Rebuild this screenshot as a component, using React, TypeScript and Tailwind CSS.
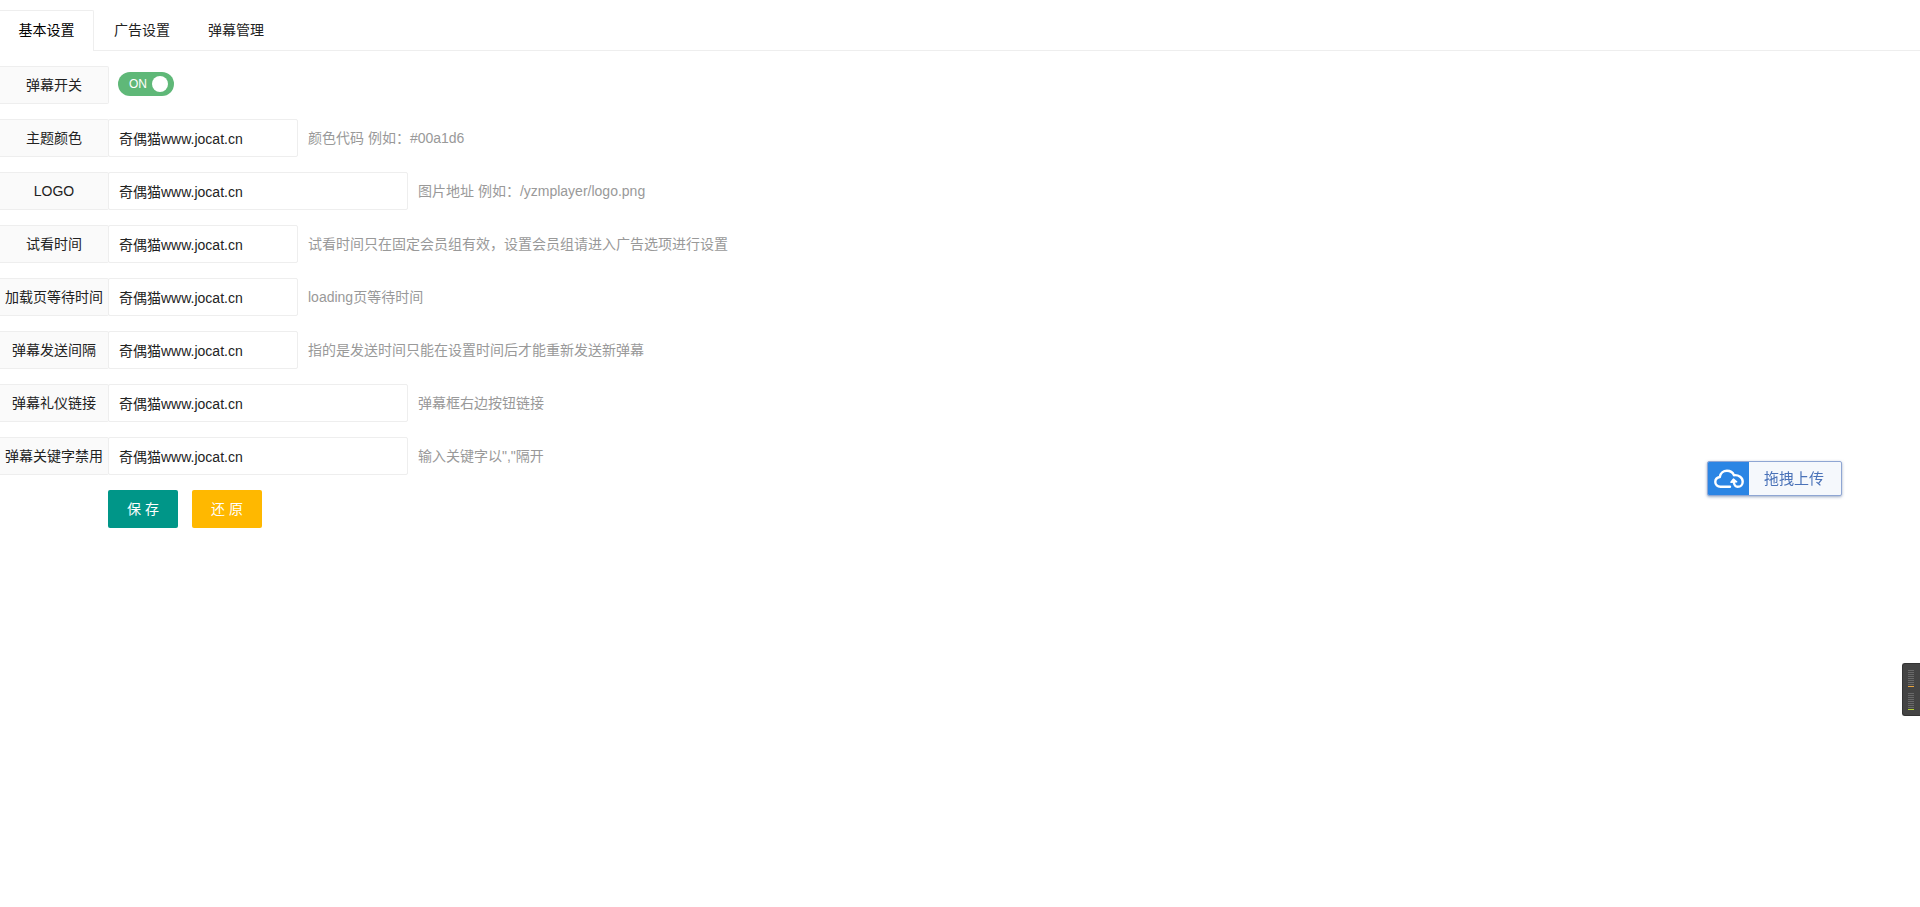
import { useState } from "react"

type Field = {
    id: string
    label: string
    hint: string
    wide?: boolean
}

const tabs = ["基本设置", "广告设置", "弹幕管理"]

const fields: Field[] = [
    { id: "color", label: "主题颜色", hint: "颜色代码 例如：#00a1d6" },
    { id: "logo", label: "LOGO", hint: "图片地址 例如：/yzmplayer/logo.png", wide: true },
    { id: "trytime", label: "试看时间", hint: "试看时间只在固定会员组有效，设置会员组请进入广告选项进行设置" },
    { id: "waittime", label: "加载页等待时间", hint: "loading页等待时间" },
    { id: "sendtime", label: "弹幕发送间隔", hint: "指的是发送时间只能在设置时间后才能重新发送新弹幕" },
    { id: "dmrule", label: "弹幕礼仪链接", hint: "弹幕框右边按钮链接", wide: true },
    { id: "pbgjz", label: "弹幕关键字禁用", hint: "输入关键字以\",\"隔开", wide: true },
]

const labelClass = "flex h-[38px] w-[109px] shrink-0 items-center justify-center whitespace-nowrap rounded-r-xs border border-l-0 border-[#eeeeee] bg-[#fafafa]"

const Tabs = () => {
    const [active, setActive] = useState(0)

    return (
        <nav className="flex h-[41px] border-b border-[#eeeeee]">
            {tabs.map((tab, i) => (
                <button
                    key={tab}
                    type="button"
                    onClick={() => setActive(i)}
                    className={
                        i === active
                            ? "-mb-px h-[41px] w-[94px] rounded-tr-xs border-t border-r border-[#eeeeee] bg-white pb-0.5 text-black"
                            : "h-10 w-[94px] pl-0.5"
                    }
                >
                    {tab}
                </button>
            ))}
        </nav>
    )
}

const Switch = () => {
    const [on, setOn] = useState(true)

    return (
        <div className="flex items-center">
            <label htmlFor="switch" className={labelClass}>弹幕开关</label>
            <label className="-mt-0.5 ml-[9px] cursor-pointer">
                <input
                    id="switch"
                    type="checkbox"
                    className="sr-only"
                    checked={on}
                    onChange={(e) => setOn(e.target.checked)}
                />
                <span
                    className={
                        on
                            ? "flex h-6 w-14 items-center justify-between rounded-full bg-[#5fb878] pr-1.5 pl-[11px] text-xs text-white"
                            : "flex h-6 w-14 flex-row-reverse items-center justify-between rounded-full bg-[#d2d2d2] pr-2 pl-1.5 text-xs text-white"
                    }
                >
                    {on ? "ON" : "OFF"}
                    <span className="size-4 rounded-full bg-white" />
                </span>
            </label>
        </div>
    )
}

const FieldRow = ({ id, label, hint, wide }: Field) => (
    <div className="flex items-center">
        <label htmlFor={id} className={labelClass}>{label}</label>
        <input
            id={id}
            type="text"
            defaultValue="奇偶猫www.jocat.cn"
            className={`-ml-px h-[38px] rounded-xs border border-[#eeeeee] bg-white pl-2.5 outline-none focus:border-[#d2d2d2] ${wide ? "w-[300px]" : "w-[190px]"}`}
        />
        <span className="ml-2.5 text-[#999999]">{hint}</span>
    </div>
)

const UploadButton = () => (
    <button
        type="button"
        className="fixed top-[461px] right-[78px] flex h-[35px] w-[135px] items-stretch overflow-hidden rounded-xs border border-[#8fa6d3] bg-[#f5f8fc] text-[15px] text-[#4a72b8] shadow-[0_1px_3px_rgba(60,90,140,0.5)]"
    >
        <span className="flex w-[41px] items-center justify-center bg-[#2b85e4]">
            <svg width="30" height="20" viewBox="0 0 30 20" fill="none" stroke="white" strokeWidth="2.4" strokeLinecap="round" strokeLinejoin="round">
                <path d="M16 17.8H6.5C3.5 17.8 1.3 15.8 1.3 13C1.3 10.4 3.2 8.4 5.8 8C6.3 4.3 9.4 1.8 13 1.8C16.2 1.8 18.8 3.6 20 6.2C24.8 5.8 28.7 8.6 28.7 12.7C28.7 15.8 26.6 17.8 23.8 17.8C21.4 17.6 20 15.6 19.8 13" />
                <path d="M17 13.2L19.4 10.2L22.6 12.8Z" fill="white" strokeWidth="1.6" />
            </svg>
        </span>
        <span className="flex flex-1 items-center justify-center pr-0.5">拖拽上传</span>
    </button>
)

const bars = [0, 1, 2, 3, 4, 5, 6, 7]

const Meter = () => (
    <div className="fixed top-[663px] right-0 flex h-[53px] w-[18px] flex-col gap-1.5 rounded-l-[3px] border border-r-0 border-[#333333] bg-[#444444] pt-1.5 pl-[5px]">
        {["bg-[#e8a33d]", "bg-[#b5d334]"].map((color) => (
            <div key={color} className="flex w-1.5 flex-col gap-px">
                {bars.map((bar) => (
                    <span key={bar} className="h-px bg-[#696969]" />
                ))}
                <span className={`h-px ${color}`} />
            </div>
        ))}
    </div>
)

const App = () => {
    return (
        <main className="min-h-screen bg-white pt-2.5 font-['Liberation_Sans','Noto_Sans_CJK_SC',sans-serif] text-sm text-[#222222]">
            <Tabs />
            <form className="mt-[15px]" onSubmit={(e) => e.preventDefault()}>
                <div className="flex flex-col gap-[15px]">
                    <Switch />
                    {fields.map((field) => (
                        <FieldRow key={field.id} {...field} />
                    ))}
                </div>
                <div className="mt-[15px] ml-[108px] flex gap-3.5">
                    <button type="submit" className="h-[38px] w-[70px] rounded-xs bg-[#009688] text-white">保 存</button>
                    <button type="reset" className="h-[38px] w-[70px] rounded-xs bg-[#ffb800] text-white">还 原</button>
                </div>
            </form>
            <UploadButton />
            <Meter />
        </main>
    )
}

export default App
